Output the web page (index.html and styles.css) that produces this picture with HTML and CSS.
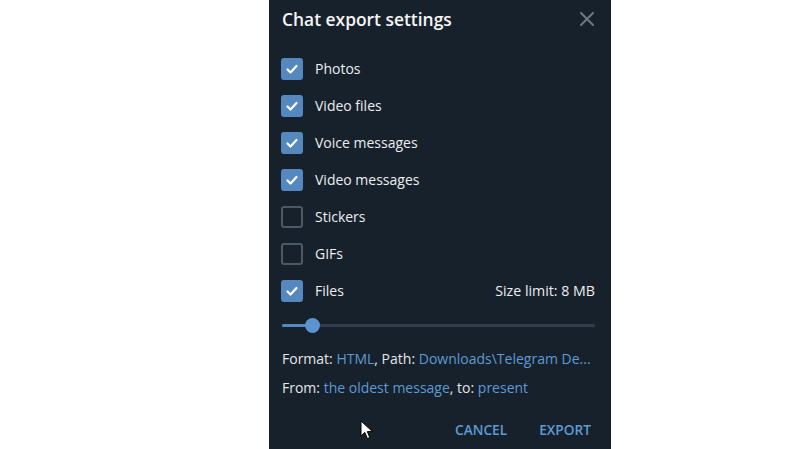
FILE: index.html
```html
<!DOCTYPE html>
<html>
<head>
<meta charset="utf-8">
<link rel="stylesheet" href="styles.css">
</head>
<body>
<div class="dialog">
  <div class="header">
    <div class="title">Chat export settings</div>
    <svg class="close" width="14" height="14" viewBox="0 0 14 14"><path d="M1 1L13 13M13 1L1 13" stroke="#6c7883" stroke-width="2" stroke-linecap="round"/></svg>
  </div>
  <div class="list">
    <div class="row"><span class="cb on"><svg viewBox="0 0 22 22" width="22" height="22"><path d="M6.5 11.5l3 3 6-6.5" fill="none" stroke="#fff" stroke-width="2.2" stroke-linecap="round" stroke-linejoin="round"/></svg></span><span class="label">Photos</span></div>
    <div class="row"><span class="cb on"><svg viewBox="0 0 22 22" width="22" height="22"><path d="M6.5 11.5l3 3 6-6.5" fill="none" stroke="#fff" stroke-width="2.2" stroke-linecap="round" stroke-linejoin="round"/></svg></span><span class="label">Video files</span></div>
    <div class="row"><span class="cb on"><svg viewBox="0 0 22 22" width="22" height="22"><path d="M6.5 11.5l3 3 6-6.5" fill="none" stroke="#fff" stroke-width="2.2" stroke-linecap="round" stroke-linejoin="round"/></svg></span><span class="label">Voice messages</span></div>
    <div class="row"><span class="cb on"><svg viewBox="0 0 22 22" width="22" height="22"><path d="M6.5 11.5l3 3 6-6.5" fill="none" stroke="#fff" stroke-width="2.2" stroke-linecap="round" stroke-linejoin="round"/></svg></span><span class="label">Video messages</span></div>
    <div class="row"><span class="cb"></span><span class="label">Stickers</span></div>
    <div class="row"><span class="cb"></span><span class="label">GIFs</span></div>
    <div class="row"><span class="cb on"><svg viewBox="0 0 22 22" width="22" height="22"><path d="M6.5 11.5l3 3 6-6.5" fill="none" stroke="#fff" stroke-width="2.2" stroke-linecap="round" stroke-linejoin="round"/></svg></span><span class="label">Files</span><span class="limit">Size limit: 8 MB</span></div>
  </div>
  <div class="slider">
    <div class="track"><div class="fill" style="width:30px"></div><div class="knob"></div></div>
  </div>
  <div class="info">
    <div>Format: <span class="link">HTML</span>, Path: <span class="link">Downloads\Telegram De...</span></div>
    <div>From: <span class="link">the oldest message</span>, to: <span class="link">present</span></div>
  </div>
  <div class="buttons">
    <span class="btn">Cancel</span>
    <span class="btn">Export</span>
  </div>
  <svg class="cursor" width="14" height="20" viewBox="0 0 14 20"><path d="M1 1V16L4.8 12.4L7.4 18.5L9.8 17.5L7.3 11.6H12.5Z" fill="#fff" stroke="#000" stroke-width="1"/></svg>
</div>
</body>
</html>
```

FILE: styles.css
```css
html, body {
  margin: 0;
  padding: 0;
  background: #ffffff;
}
body {
  font-family: "Open Sans", "Noto Sans", sans-serif;
}
.dialog {
  position: relative;
  margin-left: 269px;
  width: 342px;
  height: 449px;
  background: #17212b;
  display: flex;
  flex-direction: column;
  overflow: hidden;
}
.header {
  height: 38px;
  display: flex;
  align-items: center;
  justify-content: space-between;
  padding: 0 17px 0 13px;
}
.title {
  color: #f5f5f5;
  font-size: 17.4px;
  font-weight: 600;
  margin-top: -1px;
}
.close {
  display: block;
}
.list {
  margin-top: 12px;
  display: flex;
  flex-direction: column;
}
.row {
  height: 37px;
  display: flex;
  align-items: center;
  padding: 0 16px 0 12px;
}
.cb {
  width: 22px;
  height: 22px;
  box-sizing: border-box;
  border: 2px solid #4b5966;
  border-radius: 3px;
  flex: none;
  position: relative;
}
.cb.on {
  background: #5688c0;
  border-color: #5688c0;
}
.cb svg {
  position: absolute;
  left: -2px;
  top: -2px;
}
.label {
  margin-left: 12px;
  color: #ebeef0;
  font-size: 14px;
}
.limit {
  margin-left: auto;
  color: #ebeef0;
  font-size: 14.2px;
}
.slider {
  height: 33px;
  margin-bottom: 2px;
  display: flex;
  align-items: center;
  padding: 0 16px 0 13px;
}
.track {
  position: relative;
  flex: 1;
  height: 3px;
  background: #323e4b;
  border-radius: 2px;
}
.fill {
  height: 3px;
  background: #5688c0;
  border-radius: 2px;
}
.knob {
  position: absolute;
  left: 23px;
  top: -6px;
  width: 15px;
  height: 15px;
  border-radius: 50%;
  background: #5b94d1;
}
.info {
  padding: 0 13px;
  color: #e3e6e9;
  font-size: 14px;
  line-height: 29px;
}
.link {
  color: #5d9ad6;
}
.buttons {
  margin-top: 10px;
  height: 34px;
  display: flex;
  justify-content: flex-end;
  align-items: center;
  gap: 32px;
  padding-right: 20px;
}
.btn {
  color: #5d9ad6;
  font-size: 13.7px;
  font-weight: 600;
  text-transform: uppercase;
}
.cursor {
  position: absolute;
  left: 91px;
  top: 420px;
}
```
